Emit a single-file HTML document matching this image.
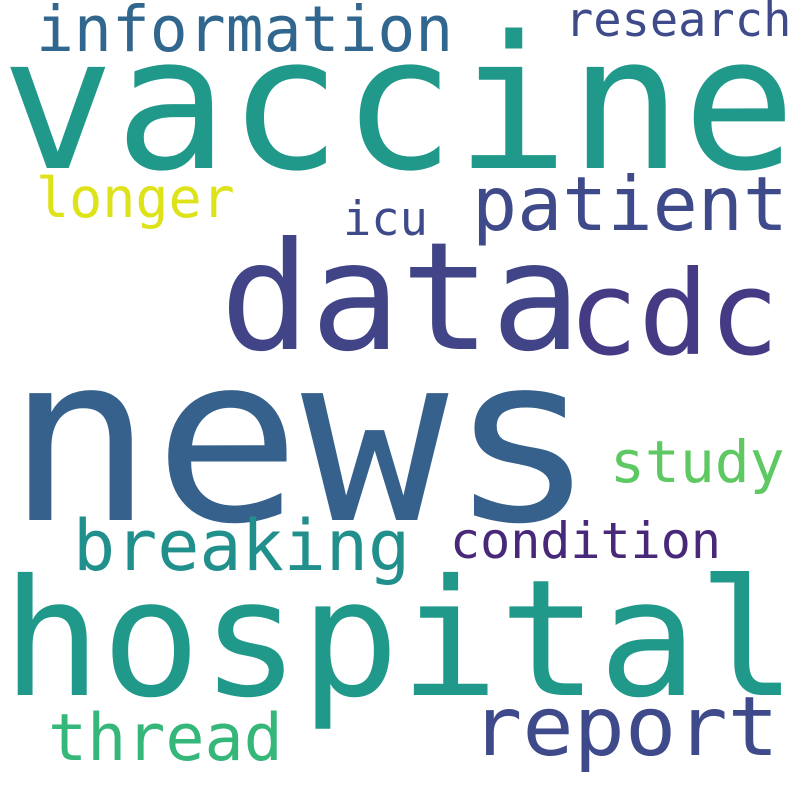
<!DOCTYPE html>
<html><head><meta charset="utf-8"><style>
html,body{margin:0;padding:0;background:#fff;width:800px;height:800px;overflow:hidden}
svg text{font-family:"DejaVu Sans Mono","Liberation Mono",monospace}
</style></head><body>
<svg width="800" height="800" viewBox="0 0 800 800" xmlns="http://www.w3.org/2000/svg">
<rect width="800" height="800" fill="#fff"/>
<text x="565" y="36" font-size="47" fill="#3e4a89">research</text>
<text x="36" y="51" font-size="63" fill="#31668e">information</text>
<text x="1" y="168" font-size="185" fill="#21998a" textLength="795" lengthAdjust="spacingAndGlyphs">vaccine</text>
<text x="36" y="217" font-size="55" fill="#dde318">longer</text>
<text x="343" y="235" font-size="47" fill="#3e4a89">icu</text>
<text x="472" y="230" font-size="75" fill="#3e4a89">patient</text>
<text x="220" y="349" font-size="150" fill="#414487">data</text>
<text x="568" y="354" font-size="117" fill="#443b84">cdc</text>
<text x="6" y="520" font-size="232" fill="#36618d" textLength="590" lengthAdjust="spacingAndGlyphs">news</text>
<text x="610" y="482" font-size="58" fill="#5ec962">study</text>
<text x="73" y="570" font-size="70" fill="#21908d">breaking</text>
<text x="450" y="558" font-size="50" fill="#482878">condition</text>
<text x="2" y="695" font-size="162" fill="#21998a" textLength="795" lengthAdjust="spacingAndGlyphs">hospital</text>
<text x="48" y="760" font-size="65" fill="#35b779">thread</text>
<text x="471" y="755" font-size="82" fill="#3e4a89" textLength="308" lengthAdjust="spacingAndGlyphs">report</text>
</svg>
</body></html>
